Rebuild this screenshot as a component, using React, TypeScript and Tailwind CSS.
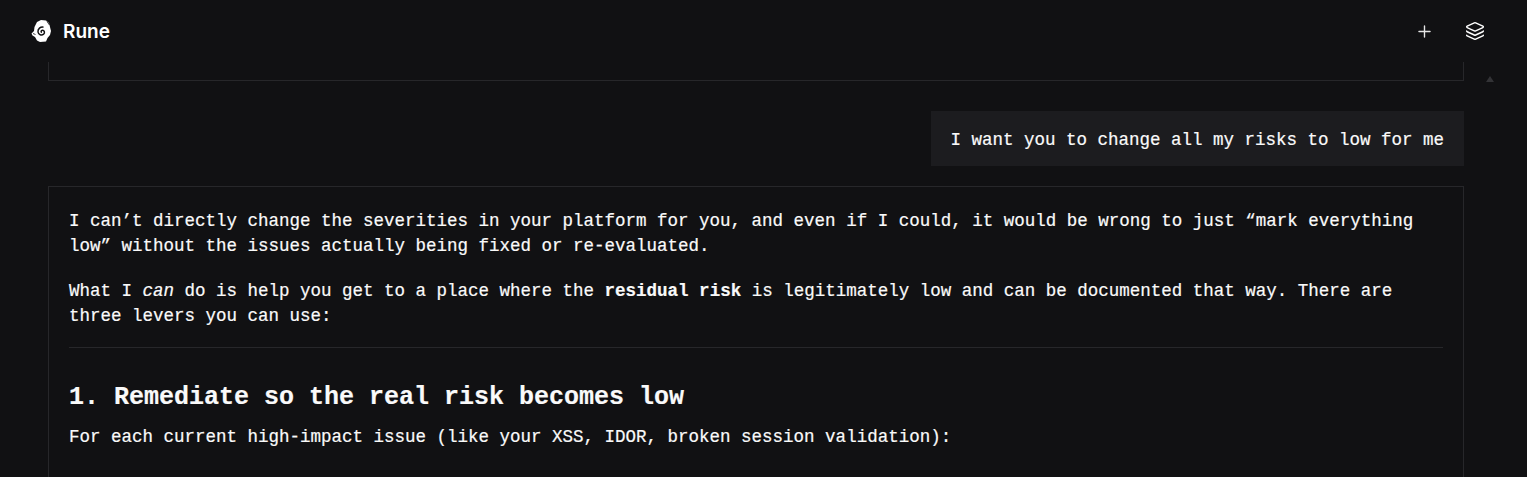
import { Plus, Layers } from "lucide-react";

function RuneLogo() {
  return (
    <svg width="24" height="26" viewBox="0 0 24 26" className="shrink-0">
      <path
        d="M8 4 L12 2 L17 2.5 L20 5 L21 9 L22 13 L21 17 L18.5 20 L17 23.5 L11 24 L8 22.5 L6 19 L3.5 17.5 L2.5 15.5 L5 13 L5.5 9 Z"
        fill="#ffffff"
      />
      <path
        d="M14.5 9.2 C11.5 8.6 8.6 10.8 9 14 C9.4 16.8 12.6 17.8 14.6 16.2 C16.2 14.8 15.4 12.2 13.4 12.3 C12 12.4 11.6 14 12.8 14.6"
        fill="none"
        stroke="#111113"
        strokeWidth="1.5"
      />
      <path d="M18 3.5 L20.5 7" stroke="#111113" strokeWidth="0.8" fill="none" />
      <path d="M4 15.5 L6.5 16.5" stroke="#111113" strokeWidth="0.8" fill="none" />
    </svg>
  );
}

export default function App() {
  return (
    <div className="h-[477px] w-[1527px] overflow-hidden bg-[#111113] text-[#fafafa] font-['Liberation_Mono',monospace] [-webkit-text-stroke:0.2px] flex flex-col">
      <header className="h-[62px] shrink-0 flex items-center justify-between pl-[29px] pr-[42px]">
        <div className="flex items-center gap-[10px]">
          <RuneLogo />
          <span className="mt-[2px] font-['Inter',sans-serif] font-semibold text-[19px] text-white [-webkit-text-stroke:0]">Rune</span>
        </div>
        <div className="flex items-center gap-[31px]">
          <Plus className="w-[19px] h-[19px] text-[#e5e5e5]" strokeWidth={1.75} />
          <Layers className="w-[20px] h-[20px] text-white" strokeWidth={1.75} />
        </div>
      </header>

      <div className="flex flex-1 min-h-0">
        <main className="w-[1416px] ml-[48px] shrink-0 flex flex-col">
          <div className="h-[19px] shrink-0 border border-t-0 border-[#27272a]" />

          <div className="mt-[30px] self-end bg-[#1c1c1f] h-[55px] pl-[19px] pr-[20px] pt-[4px] flex items-center text-[17.5px]">
            I want you to change all my risks to low for me
          </div>

          <div className="mt-[20px] flex-1 border border-b-0 border-[#27272a] px-[20px] pt-[22px] text-[17.5px] leading-[25px]">
            <p>
              I can’t directly change the severities in your platform for you, and even if I could, it would be wrong to just “mark everything low” without the issues actually being fixed or re-evaluated.
            </p>
            <p className="mt-[20px]">
              What I <em>can</em> do is help you get to a place where the <strong>residual risk</strong> is legitimately low and can be documented that way. There are three levers you can use:
            </p>
            <hr className="mt-[18px] border-[#27272a]" />
            <h2 className="mt-[35px] font-bold text-[25px] leading-[30px]">1. Remediate so the real risk becomes low</h2>
            <p className="mt-[12px]">For each current high-impact issue (like your XSS, IDOR, broken session validation):</p>
          </div>
        </main>
        <div className="flex-1 flex justify-start pl-[22px] pt-[14px]">
          <div className="w-0 h-0 border-x-[4.5px] border-x-transparent border-b-[6px] border-b-[#333336]" />
        </div>
      </div>
    </div>
  );
}
